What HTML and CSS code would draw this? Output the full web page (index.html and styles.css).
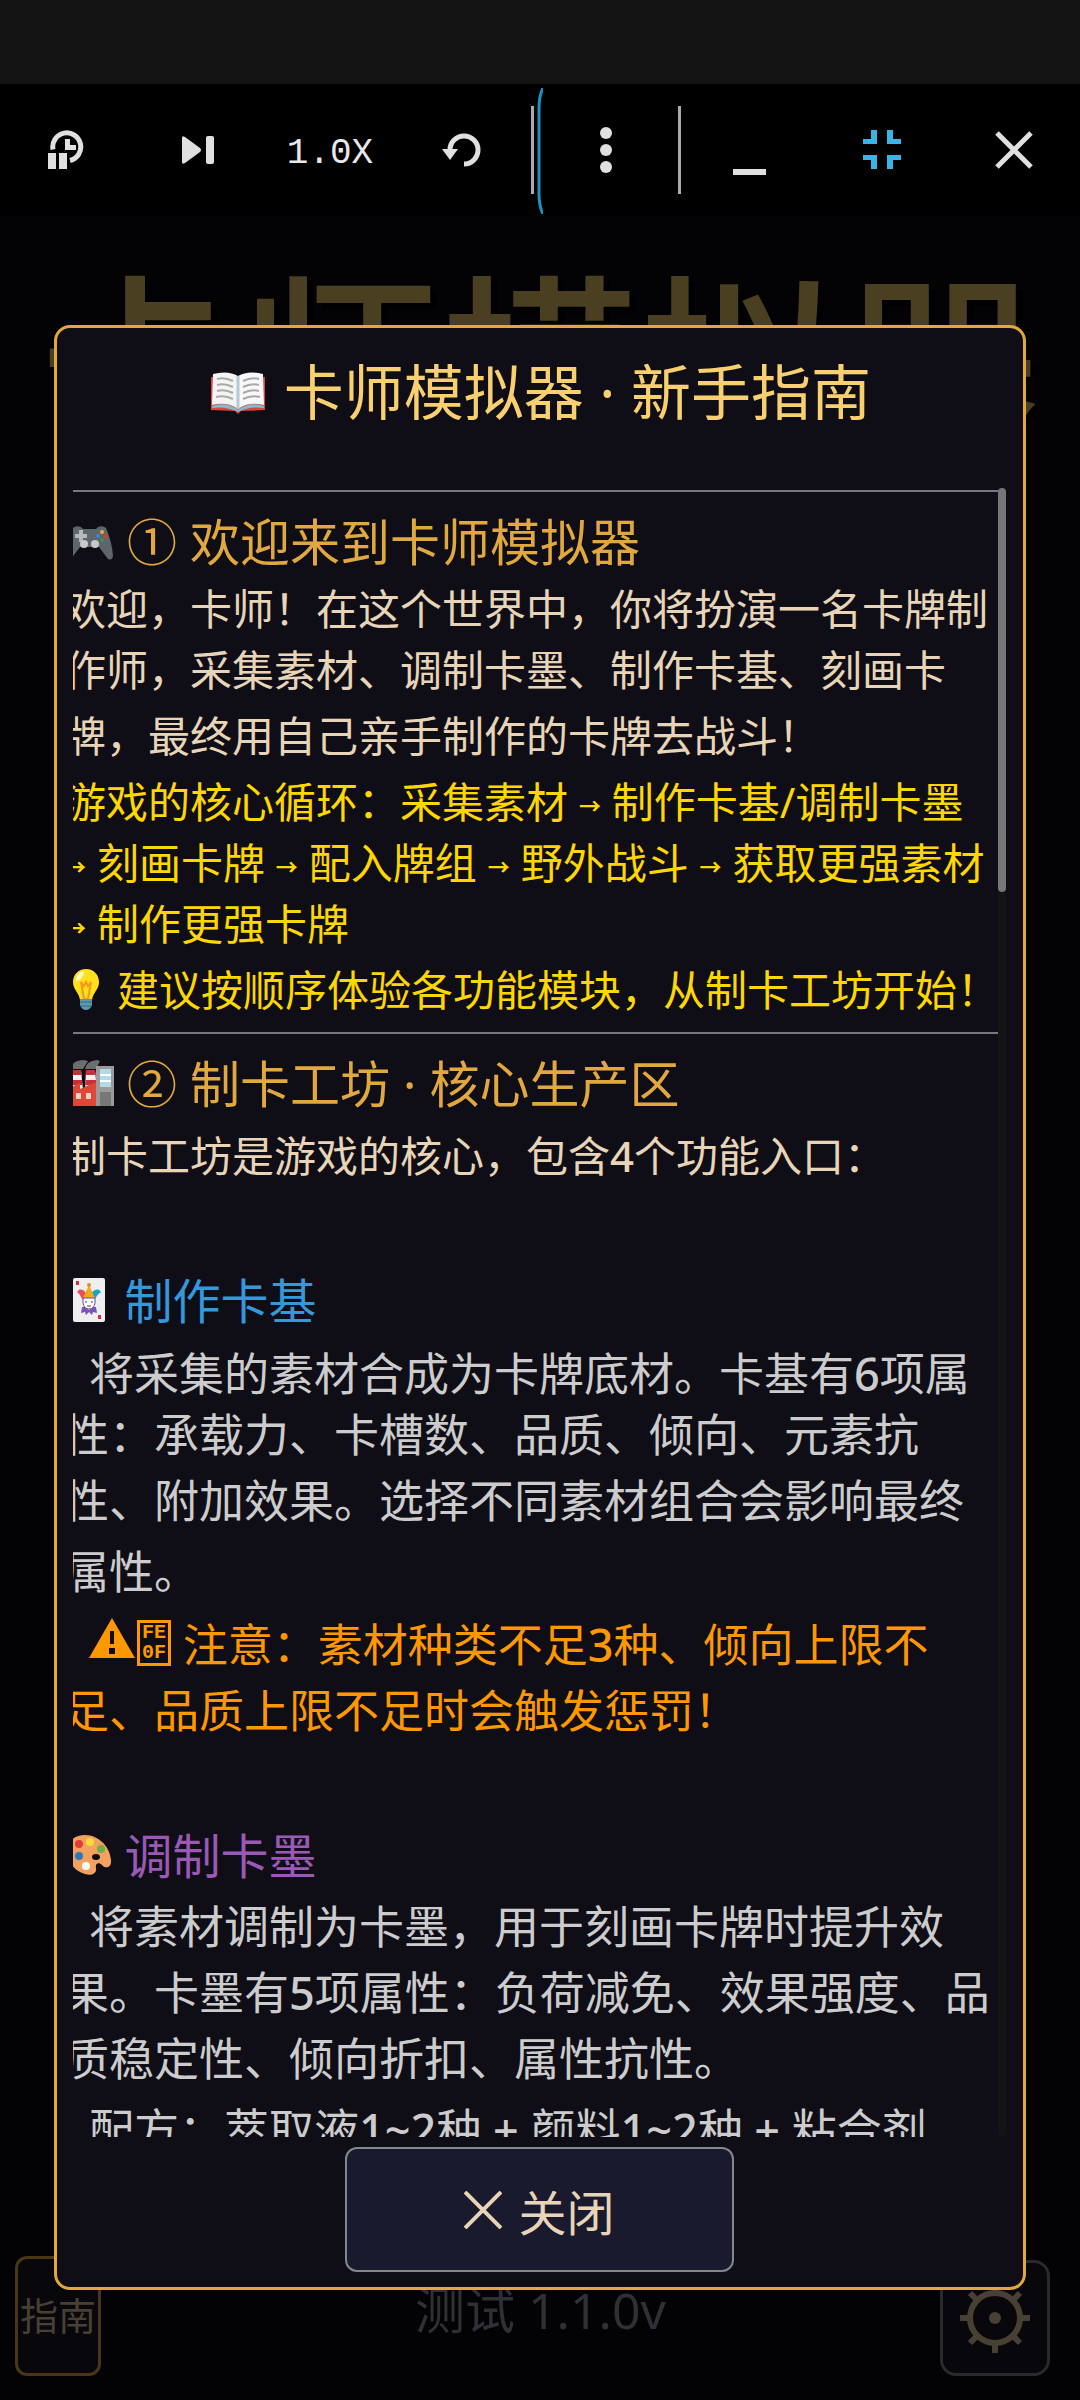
FILE: index.html
```html
<!DOCTYPE html>
<html lang="zh-CN">
<head>
    <meta charset="UTF-8">
    <meta name="viewport" content="width=device-width, initial-scale=1.0">
    <title>卡师模拟器 · 新手指南</title>
    <link rel="stylesheet" href="styles.css">
</head>
<body>
    <div class="status-bar"></div>

    <nav class="toolbar">
        <button type="button" class="tool" aria-label="暂停计时">
            <svg width="36" height="40" viewBox="0 0 36 40">
                <path d="M5 19.500a14 14 0 1 1 17 11" fill="none" stroke="#e0e0e0" stroke-width="5"/>
                <path d="M17 9v11h11v-5h-6v-6z" fill="#e0e0e0"/>
                <path d="M0 23h8v16H0zM11 23h8v16h-8z" fill="#e0e0e0"/>
            </svg>
        </button>
        <button type="button" class="tool" aria-label="下一步">
            <svg width="34" height="28" viewBox="0 0 34 28" fill="#e0e0e0">
                <path d="M1 2q0-3 3-1l15 11q2 2 0 4L4 27q-3 2-3-1z"/>
                <rect x="25" y="0" width="8" height="28" rx="2"/>
            </svg>
        </button>
        <button type="button" class="tool speed">1.0X</button>
        <button type="button" class="tool" aria-label="重置">
            <svg width="40" height="36" viewBox="0 0 40 36">
                <path d="M8 18a14 14 0 1 1 14 14" fill="none" stroke="#e0e0e0" stroke-width="5"/>
                <path d="M0 17h16l-8 11z" fill="#e0e0e0"/>
            </svg>
        </button>
        <span class="divider first"></span>
        <button type="button" class="tool more" aria-label="更多">
            <svg class="edge" width="6" height="126" viewBox="0 0 6 126">
                <path d="M6 0Q2 8 2 20v86q0 12 4 20" fill="none" stroke="#1994c4" stroke-width="3"/>
            </svg>
            <svg width="12" height="46" viewBox="0 0 12 46" fill="#e0e0e0">
                <circle cx="6" cy="6" r="6"/>
                <circle cx="6" cy="23" r="6"/>
                <circle cx="6" cy="40" r="6"/>
            </svg>
        </button>
        <span class="divider last"></span>
        <button type="button" class="tool" aria-label="最小化">
            <svg width="34" height="50" viewBox="0 0 34 50"><path d="M0 44h33v6H0z" fill="#e0e0e0"/></svg>
        </button>
        <button type="button" class="tool" aria-label="退出全屏">
            <svg width="38" height="40" viewBox="0 0 38 40" fill="#39b4e6">
                <path d="M8 0h6v14H0V9h8zM24 0h6v9h8v5H24zM0 25h14v14H8v-9H0zM24 25h14v5h-8v9h-6z"/>
            </svg>
        </button>
        <button type="button" class="tool" aria-label="关闭">
            <svg width="38" height="38" viewBox="0 0 38 38"><path d="M2 2l34 34M36 2L2 36" stroke="#e0e0e0" stroke-width="5"/></svg>
        </button>
    </nav>

    <main class="stage">
        <h1 class="game-title">卡师模拟器</h1>

        <footer class="stage-footer">
            <button type="button" class="guide-button">指南</button>
            <span class="version">测试 1.1.0v</span>
            <button type="button" class="settings-button" aria-label="设置">
                <svg width="70" height="70" viewBox="0 0 70 70" fill="none" stroke="#484033">
                    <circle cx="35" cy="35" r="25" stroke-width="6"/>
                    <path d="M35 0v10M35 60v10M0 35h10M60 35h10M10 10l8 8M52 52l8 8M60 10l-8 8M10 60l8-8" stroke-width="6"/>
                    <circle cx="35" cy="35" r="6" fill="#484033" stroke="none"/>
                </svg>
            </button>
        </footer>

        <section class="modal" role="dialog" aria-labelledby="guide-title">
            <h2 class="modal-title" id="guide-title">
                <svg class="emoji" viewBox="0 0 60 60">
                    <path d="M3 16l26 3 2 0 26-3v33l-24 1-3 3-3-3-24-1z" fill="#d9453f"/>
                    <path d="M4 45q14-5 26 4 12-9 26-4v2q-14-2-26 4-12-6-26-4z" fill="#85bccd"/>
                    <path d="M5 13q15-4 25 2v33Q19 40 4 44z" fill="#f4f4f4"/>
                    <path d="M55 13q-15-4-25 2v33q11-8 26-4z" fill="#f8f8f8"/>
                    <path d="M30 15v33" stroke="#b3cbd3" stroke-width="3"/>
                    <path d="M9 18q8-2 16 2M9 24q8-2 16 2M9 30q8-2 16 2M8 36q9-2 17 2M51 18q-8-2-16 2M51 24q-8-2-16 2M51 30q-8-2-16 2M52 36q-9-2-17 2" fill="none" stroke="#a9a9a9" stroke-width="2"/>
                </svg>
                卡师模拟器 · 新手指南
            </h2>

            <div class="modal-body">
                <div class="guide">
                    <hr>
                    <h3 class="heading">
                        <svg class="emoji" viewBox="0 0 50 50">
                            <path d="M9 12q3-3 8-1l2 2h13l2-2q5-2 8 1 6 14 7 28-1 5-5 3L35 31H16L7 43q-4 2-5-3Q3 26 9 12z" fill="#5d666b"/>
                            <path d="M11 18h4v-4h4v4h4v4h-4v4h-4v-4h-4z" fill="#b8b8b8"/>
                            <circle cx="20" cy="28" r="4" fill="#c8c8c8"/>
                            <circle cx="31" cy="28" r="4" fill="#c8c8c8"/>
                            <circle cx="38" cy="16" r="2" fill="#e8b22e"/>
                            <circle cx="34" cy="20" r="2" fill="#3a86d8"/>
                            <circle cx="42" cy="20" r="2" fill="#d83d35"/>
                            <circle cx="38" cy="24" r="2" fill="#35964c"/>
                        </svg>
                        ① 欢迎来到卡师模拟器
                    </h3>
                    <p class="intro">
                        <span class="line spaced">欢迎，卡师！在这个世界中，你将扮演一名卡牌制</span>
                        <span class="line">作师，采集素材、调制卡墨、制作卡基、刻画卡</span>
                        <span class="line spaced">牌，最终用自己亲手制作的卡牌去战斗！</span>
                    </p>
                    <p class="intro tip">
                        <span class="line spaced">游戏的核心循环：采集素材 <i>→</i> 制作卡基/调制卡墨</span>
                        <span class="line"><i>→</i> 刻画卡牌 <i>→</i> 配入牌组 <i>→</i> 野外战斗 <i>→</i> 获取更强素材</span>
                        <span class="line"><i>→</i> 制作更强卡牌</span>
                        <span class="line spaced">
                            <svg class="emoji" viewBox="0 0 42 42">
                                <path d="M22 1c8 0 13 6 13 13 0 8-6 10-7 18H16c-1-8-7-10-7-18C9 7 14 1 22 1z" fill="#ffe01b"/>
                                <path d="M20 3c-5 1-8 5-8 10 4 0 8-5 8-10z" fill="#fffbd0"/>
                                <path d="M17 14l3 4 2-4 2 4 3-4-3 17h-4z" fill="none" stroke="#f39a1d" stroke-width="2"/>
                                <path d="M16 31h12v6q-2 5-6 5t-6-5z" fill="#5b9bb0"/>
                                <path d="M16 34h12M17 38h10" stroke="#2f6a80" stroke-width="1"/>
                            </svg>
                            建议按顺序体验各功能模块，从制卡工坊开始！
                        </span>
                    </p>
                    <hr class="section-rule">
                    <h3 class="heading">
                        <svg class="emoji" viewBox="0 0 50 50">
                            <path d="M8 12h9l2 20H7zM22 12h9l2 20H21z" fill="#f2f2f2"/>
                            <path d="M8 12h9v5H8zM22 12h9v5h-9zM8 22h10v5H7zM22 22h10v5H21z" fill="#c9303b"/>
                            <path d="M7 11q0-8 12-9l5 1-5 8zM21 11q1-8 12-9l3 1-4 8z" fill="#6d6d6d"/>
                            <path d="M32 8h18v40H32z" fill="#9b9b9b"/>
                            <path d="M36 11h11v18H36z" fill="#b3dbe4"/>
                            <path d="M36 17h11M36 23h11" stroke="#fff" stroke-width="2"/>
                            <path d="M36 34h11v14H36z" fill="#777"/>
                            <path d="M3 31l13-6v6l16-7v24H3z" fill="#df4734"/>
                            <path d="M12 35h5v6h-5zM22 35h5v6h-5z" fill="#f3d3c8"/>
                        </svg>
                        ② 制卡工坊 · 核心生产区
                    </h3>
                    <p class="intro">
                        <span class="line wide">制卡工坊是游戏的核心，包含<b>4</b>个功能入口：</span>
                    </p>

                    <h4 class="subheading blue">
                        <svg class="emoji" viewBox="0 0 48 48">
                            <rect x="9" y="2" width="32" height="44" rx="2" fill="#efefef"/>
                            <path d="M12 5h3v4h-3zM34 39h3v4h-3z" fill="#d32f3c"/>
                            <path d="M18 23q-5-10-5-4 0-7 6-5 3 1 3 8z" fill="#e8505b"/>
                            <path d="M31 23q6-10 6-4 0-7-6-5-4 1-4 8z" fill="#1aa3c9"/>
                            <path d="M19 22l6-13 6 13z" fill="#f6a81c"/>
                            <circle cx="25" cy="9" r="2" fill="#e0901a"/>
                            <path d="M19 22h12v5q-1 6-6 6t-6-6z" fill="#fff" stroke="#6b4da0"/>
                            <path d="M18 31l3 0 4 3 4-3h3l1 6-4-1-1 3-3-3-3 3-1-3-4 1z" fill="#7a57b5"/>
                            <path d="M21 26h2M27 26h2M23 30h4" stroke="#6b3030"/>
                        </svg>
                        制作卡基
                    </h4>
                    <p class="detail">
                        <span class="line opening indent">将采集的素材合成为卡牌底材。卡基有<b>6</b>项属</span>
                        <span class="line">性：承载力、卡槽数、品质、倾向、元素抗</span>
                        <span class="line spaced">性、附加效果。选择不同素材组合会影响最终</span>
                        <span class="line wide">属性。</span>
                    </p>
                    <p class="detail warning">
                        <span class="line opening indent"><svg class="alert" viewBox="0 0 46 40"><path d="M23 0l23 40H0z" fill="#ff9800"/><path d="M21 13h4v13h-4zM20 30h6v6h-6z" fill="#0f0e17"/></svg><span class="codepoint">FE<br>0F</span> 注意：素材种类不足<b>3</b>种、倾向上限不</span>
                        <span class="line spaced">足、品质上限不足时会触发惩罚！</span>
                    </p>

                    <h4 class="subheading purple">
                        <svg class="emoji" viewBox="0 0 48 48">
                            <path d="M21 4c13 0 25 11 26 25 1 8-6 9-9 5-3-3-7-2-6 3 1 6-5 8-11 6C10 40 3 30 3 20 3 10 11 4 21 4z" fill="#f2a15e"/>
                            <ellipse cx="32" cy="26" rx="4" ry="3" fill="#0f0e17"/>
                            <circle cx="15" cy="13" r="4" fill="#e33b38"/>
                            <circle cx="26" cy="11" r="4" fill="#f8dc35"/>
                            <circle cx="37" cy="18" r="4" fill="#6cb04a"/>
                            <circle cx="15" cy="25" r="4" fill="#2878c0"/>
                            <circle cx="22" cy="35" r="4" fill="#fafafa"/>
                        </svg>
                        调制卡墨
                    </h4>
                    <p class="detail">
                        <span class="line wide indent">将素材调制为卡墨，用于刻画卡牌时提升效</span>
                        <span class="line spaced">果。卡墨有<b>5</b>项属性：负荷减免、效果强度、品</span>
                        <span class="line spaced">质稳定性、倾向折扣、属性抗性。</span>
                        <span class="line wide indent">配方：萃取液<b>1~2</b>种 <b>+</b> 颜料<b>1~2</b>种 <b>+</b> 粘合剂</span>
                    </p>
                </div>
                <div class="scrollbar"><div class="thumb"></div></div>
            </div>

            <button type="button" class="close-button">
                <svg width="38" height="38" viewBox="0 0 38 38"><path d="M1 1l36 36M37 1L1 37" stroke="#e8d5b7" stroke-width="4"/></svg>
                关闭
            </button>
        </section>
    </main>
</body>
</html>
```

FILE: styles.css
```css
* {
    margin: 0;
    padding: 0;
    box-sizing: border-box;
}

body {
    background: #030305;
    color: #e8d5b7;
    font-family: "Noto Sans", "Noto Sans CJK SC", sans-serif;
    display: flex;
    flex-direction: column;
    height: 100vh;
    overflow: hidden;
}

button {
    font-family: inherit;
    cursor: pointer;
}

b {
    font-weight: 500;
}

.status-bar {
    height: 84px;
    flex: none;
    background: #141414;
}

/* toolbar */
.toolbar {
    height: 132px;
    flex: none;
    display: flex;
    align-items: center;
    background: #000;
}

.tool {
    flex: 11 1 0;
    height: 100%;
    display: flex;
    justify-content: center;
    align-items: center;
    background: none;
    border: none;
}

.speed {
    color: #e8e8e8;
    font-family: "Liberation Mono", monospace;
    font-size: 36px;
    padding-top: 6px;
}

.more {
    flex-grow: 12;
    position: relative;
}

.edge {
    position: absolute;
    left: 3px;
    top: 4px;
}

.divider {
    width: 3px;
    height: 88px;
    background: #aaa;
}

.first {
    margin-left: 3px;
}

.last {
    margin-right: 3px;
}

/* screen behind the guide */
.stage {
    flex: 1;
    min-height: 0;
    position: relative;
    display: flex;
    flex-direction: column;
    justify-content: space-between;
}

.game-title {
    padding-top: 52px;
    color: #4b3f22;
    font-size: 200px;
    font-weight: 500;
    line-height: 200px;
    text-align: center;
    white-space: nowrap;
    text-shadow: 6px 6px 0 #000;
}

.stage-footer {
    display: grid;
    grid-template-columns: 126px 1fr 110px;
    align-items: end;
    padding: 0 30px 24px 15px;
}

.guide-button {
    width: 86px;
    height: 120px;
    padding-bottom: 6px;
    background: #07070c;
    color: #484033;
    border: 3px solid #4a3516;
    border-radius: 12px;
    font-size: 38px;
    white-space: nowrap;
}

.version {
    align-self: center;
    padding-bottom: 12px;
    color: #2f2f35;
    font-size: 50px;
    line-height: 60px;
    text-align: center;
}

.settings-button {
    width: 110px;
    height: 116px;
    display: flex;
    justify-content: center;
    align-items: center;
    background: #07070c;
    border: 3px solid #2a2a2e;
    border-radius: 16px;
}

/* guide dialog */
.modal {
    position: absolute;
    top: 109px;
    bottom: 110px;
    left: 5%;
    right: 5%;
    padding: 0 17px 15px 16px;
    display: flex;
    flex-direction: column;
    align-items: center;
    background: #0f0e17;
    border: 3px solid #e2a840;
    border-radius: 16px;
}

.modal-title {
    height: 160px;
    flex: none;
    padding-top: 28px;
    color: #f8d070;
    font-size: 60px;
    font-weight: normal;
    line-height: 72px;
    white-space: nowrap;
}

.emoji {
    width: 1em;
    height: 1em;
    vertical-align: -0.1em;
}

.modal-body {
    width: 100%;
    flex: 1;
    min-height: 0;
    display: flex;
}

.guide {
    flex: 1;
    min-width: 0;
    overflow: hidden;
    padding-top: 2px;
    line-height: 61px;
    white-space: nowrap;
}

.guide hr {
    border: none;
    height: 2px;
    background: #77777c;
}

.guide .section-rule {
    margin-top: 12px;
}

/* text starts a little outside the clipped area */
.guide h3,
.guide h4,
.guide p {
    margin-left: -9px;
    font-weight: normal;
}

.heading {
    padding-top: 20px;
    color: #e2a840;
    font-size: 50px;
}

.subheading {
    padding-top: 84px;
    font-size: 48px;
}

.blue {
    color: #3498db;
}

.purple {
    color: #9b59b6;
}

.intro {
    color: #e8d5b7;
    font-size: 42px;
}

.detail {
    color: #ccc;
    font-size: 45px;
}

.tip {
    color: #ffd700;
}

.tip i {
    font-size: 22px;
    font-style: normal;
    font-weight: 700;
    vertical-align: 4px;
    line-height: 22px;
}

.warning {
    color: #ff9800;
}

.line {
    display: block;
}

.spaced {
    padding-top: 5px;
}

.wide {
    padding-top: 10px;
}

.opening {
    padding-top: 12px;
}

.indent {
    padding-left: 25px;
}

.alert {
    width: 46px;
    height: 40px;
    vertical-align: 4px;
}

.codepoint {
    display: inline-block;
    width: 34px;
    height: 46px;
    margin-left: 2px;
    border: 3px solid #ff9800;
    font-family: "Liberation Mono", monospace;
    font-size: 20px;
    font-weight: 700;
    line-height: 20px;
    text-align: center;
    vertical-align: 4px;
}

.scrollbar {
    width: 8px;
    background: #141416;
    border-radius: 4px;
}

.thumb {
    height: 404px;
    background: #777;
    border-radius: 4px;
}

.close-button {
    width: 389px;
    height: 125px;
    flex: none;
    margin-top: 10px;
    display: flex;
    justify-content: center;
    align-items: center;
    gap: 16px;
    background: #1a1a2e;
    color: #e8d5b7;
    border: 2px solid #85858c;
    border-radius: 12px;
    font-size: 48px;
}
```
